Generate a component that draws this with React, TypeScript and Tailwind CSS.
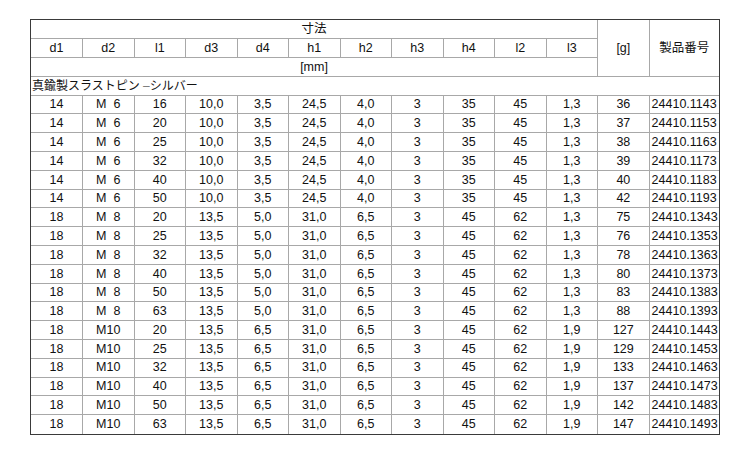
import React from 'react';

type Group = {
  d1: string;
  d2: string;
  d3: string;
  d4: string;
  h1: string;
  h2: string;
  h4: string;
  l2: string;
  l3: string;
  items: [string, string, string][];
};

const groups: Group[] = [
  {
    d1: '14', d2: 'M\u00a0\u00a06', d3: '10,0', d4: '3,5', h1: '24,5', h2: '4,0', h4: '35', l2: '45', l3: '1,3',
    items: [
      ['16', '36', '24410.1143'],
      ['20', '37', '24410.1153'],
      ['25', '38', '24410.1163'],
      ['32', '39', '24410.1173'],
      ['40', '40', '24410.1183'],
      ['50', '42', '24410.1193'],
    ],
  },
  {
    d1: '18', d2: 'M\u00a0\u00a08', d3: '13,5', d4: '5,0', h1: '31,0', h2: '6,5', h4: '45', l2: '62', l3: '1,3',
    items: [
      ['20', '75', '24410.1343'],
      ['25', '76', '24410.1353'],
      ['32', '78', '24410.1363'],
      ['40', '80', '24410.1373'],
      ['50', '83', '24410.1383'],
      ['63', '88', '24410.1393'],
    ],
  },
  {
    d1: '18', d2: 'M10', d3: '13,5', d4: '6,5', h1: '31,0', h2: '6,5', h4: '45', l2: '62', l3: '1,9',
    items: [
      ['20', '127', '24410.1443'],
      ['25', '129', '24410.1453'],
      ['32', '133', '24410.1463'],
      ['40', '137', '24410.1473'],
      ['50', '142', '24410.1483'],
      ['63', '147', '24410.1493'],
    ],
  },
];

const dims = ['d1', 'd2', 'l1', 'd3', 'd4', 'h1', 'h2', 'h3', 'h4', 'l2', 'l3'];

const cell = 'border border-[#a8a8a8] p-0 text-center font-normal';

export default function App() {
  const rows = groups.flatMap((g) =>
    g.items.map(([l1, weight, code]) => [g.d1, g.d2, l1, g.d3, g.d4, g.h1, g.h2, '3', g.h4, g.l2, g.l3, weight, code])
  );

  return (
    <div className="w-[750px] h-[450px] bg-white pt-[19px] pl-[30px] font-['Liberation_Sans','Noto_Sans_CJK_JP',sans-serif] text-[12.5px] leading-none text-[#111]">
      <div className="w-[690px] border border-[#3a3a3a]">
        <table className="w-full table-fixed border-collapse border-hidden">
          <colgroup>
            {dims.map((d) => (
              <col key={d} className="w-[51.5px]" />
            ))}
            <col className="w-[51.5px]" />
            <col className="w-[70px]" />
          </colgroup>
          <thead>
            <tr className="h-[18.8px]">
              <th colSpan={11} className={cell}>寸法</th>
              <th rowSpan={3} className={cell}>[g]</th>
              <th rowSpan={3} className={cell}>製品番号</th>
            </tr>
            <tr className="h-[18.8px]">
              {dims.map((d) => (
                <th key={d} className={cell}>{d}</th>
              ))}
            </tr>
            <tr className="h-[18.8px]">
              <th colSpan={11} className={cell}>[mm]</th>
            </tr>
          </thead>
          <tbody>
            <tr className="h-[18.8px]">
              <td colSpan={13} className="border border-[#a8a8a8] p-0 pl-px text-left text-[12px]">
                真鍮製スラストピン <span className="text-[#777]">–</span>シルバー
              </td>
            </tr>
            {rows.map((r, i) => (
              <tr key={i} className="h-[18.8px]">
                {r.map((v, j) =>
                  j === 12 ? (
                    <td key={j} className="border border-[#a8a8a8] p-0 pl-[2px] text-left">{v}</td>
                  ) : (
                    <td key={j} className={cell}>{v}</td>
                  )
                )}
              </tr>
            ))}
          </tbody>
        </table>
      </div>
    </div>
  );
}
